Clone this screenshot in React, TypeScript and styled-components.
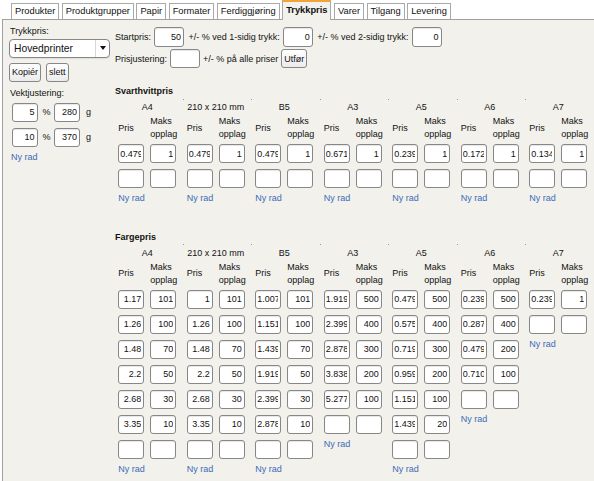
import React from "react";
import styled, { createGlobalStyle } from "styled-components";

const GlobalStyle = createGlobalStyle`
  html, body {
    margin: 0;
    padding: 0;
    background: #fff;
  }
  body {
    font-family: "Liberation Sans", Arial, sans-serif;
    font-size: 9px;
    color: #111;
  }
`;

const Page = styled.div`
  width: 594px;
  height: 481px;
  overflow: hidden;
  display: flex;
  flex-direction: column;
`;

const TabBar = styled.div`
  display: flex;
  align-items: flex-end;
  height: 19px;
  padding-left: 11px;
  gap: 2.5px;
  position: relative;
  z-index: 1;
`;

const Tab = styled.div<{ $active?: boolean }>`
  box-sizing: border-box;
  height: ${(p) => (p.$active ? 20 : 16)}px;
  margin-bottom: ${(p) => (p.$active ? -1 : 0)}px;
  padding: 0 3px;
  border: 1px solid #a9a9a9;
  border-bottom: none;
  border-top: ${(p) => (p.$active ? "2px solid #f2a33a" : "1px solid #a9a9a9")};
  background: ${(p) => (p.$active ? "#f2f1ec" : "#fff")};
  font-size: 9.3px;
  font-weight: ${(p) => (p.$active ? "bold" : "normal")};
  line-height: ${(p) => (p.$active ? 17 : 15)}px;
  white-space: nowrap;
`;

const Panel = styled.div`
  flex: 1;
  display: flex;
  margin-left: 2px;
  padding: 5px 0 0 6px;
  background: #f2f1ec;
  border-top: 1px solid #a0a0a0;
  border-left: 1px solid #a0a0a0;
`;

const LeftCol = styled.div`
  width: 106px;
  flex-shrink: 0;
  display: flex;
  flex-direction: column;
`;

const Label = styled.div<{ $top?: number }>`
  line-height: 11px;
  margin-top: ${(p) => p.$top ?? 0}px;
  padding-left: 1px;
`;

const SelectBox = styled.div`
  box-sizing: border-box;
  width: 101px;
  height: 19px;
  margin-top: 2px;
  display: flex;
  align-items: center;
  border: 1px solid #878787;
  border-radius: 4px;
  background: #fff;
  box-shadow: 0 1px 1px rgba(0, 0, 0, 0.08);
`;

const SelectText = styled.span`
  flex: 1;
  padding-left: 4px;
  font-size: 10.3px;
`;

const SelectArrow = styled.span`
  width: 13px;
  height: 100%;
  display: flex;
  align-items: center;
  justify-content: center;
  border-left: 1px solid #d6d6d6;

  &::after {
    content: "";
    border-left: 3.5px solid transparent;
    border-right: 3.5px solid transparent;
    border-top: 4px solid #111;
  }
`;

const ButtonRow = styled.div`
  display: flex;
  gap: 5px;
  margin-top: 5px;
`;

const Button = styled.button`
  box-sizing: border-box;
  height: 19px;
  margin: 0;
  padding: 0 2px;
  border: 1px solid #878787;
  border-radius: 3px;
  background: linear-gradient(#ffffff, #ebebeb);
  font-family: "Liberation Sans", Arial, sans-serif;
  font-size: 9px;
  color: #111;
`;

const WeightRow = styled.div<{ $top: number }>`
  display: flex;
  align-items: center;
  margin-top: ${(p) => p.$top}px;
  padding-left: 2.5px;
`;

const Unit = styled.span<{ $l: number; $r?: number }>`
  margin-left: ${(p) => p.$l}px;
  margin-right: ${(p) => p.$r ?? 0}px;
`;

const Field = styled.input<{ $w?: number; $h?: number }>`
  box-sizing: border-box;
  width: ${(p) => p.$w ?? 26}px;
  height: ${(p) => p.$h ?? 19}px;
  margin: 0;
  padding: 0 2px 0 1px;
  border: 1px solid #878787;
  border-radius: 3px;
  background: #fff;
  box-shadow: inset 0 1px 1px rgba(0, 0, 0, 0.1);
  font-family: "Liberation Sans", Arial, sans-serif;
  font-size: 9px;
  color: #111;
  text-align: right;
  outline: none;
`;

const Link = styled.div<{ $top: number; $indent?: number }>`
  margin-top: ${(p) => p.$top}px;
  padding-left: ${(p) => p.$indent ?? 0}px;
  line-height: 11px;
  color: #3b6cb8;
  cursor: pointer;
`;

const Main = styled.div`
  flex: 1;
  display: flex;
  flex-direction: column;
`;

const ControlRow = styled.div<{ $top: number }>`
  display: flex;
  align-items: center;
  gap: 3px;
  margin-top: ${(p) => p.$top}px;
  white-space: nowrap;
`;

const After = styled.span`
  margin-left: 1.5px;
`;

const SectionTitle = styled.div<{ $top: number }>`
  margin-top: ${(p) => p.$top}px;
  line-height: 11px;
  font-weight: bold;
`;

const FormatRow = styled.div`
  display: flex;
  align-items: flex-start;
  gap: 10.5px;
  padding-left: 3.3px;
  margin-top: 5px;
`;

const Group = styled.div`
  position: relative;
  width: 58px;
  flex-shrink: 0;
  display: flex;
  flex-direction: column;

  &:not(:first-child)::before {
    content: "";
    position: absolute;
    top: -3.5px;
    left: -4px;
    width: 1px;
    height: 1px;
    background: #9a9a9a;
  }
`;

const GroupName = styled.div`
  height: 11px;
  line-height: 11px;
  text-align: center;
  white-space: nowrap;
`;

const Grid = styled.div<{ $top: number }>`
  display: grid;
  grid-template-columns: 26px 26px;
  column-gap: 6px;
  row-gap: 6px;
  align-items: center;
  margin-top: ${(p) => p.$top}px;
`;

const ColHead = styled.div`
  line-height: 13px;
`;

type Row = [string, string];
type Format = { name: string; rows: Row[] };

const blank: Row = ["", ""];

const mono: Format[] = [
  { name: "A4", rows: [["0.479", "1"], blank] },
  { name: "210 x 210 mm", rows: [["0.479", "1"], blank] },
  { name: "B5", rows: [["0.479", "1"], blank] },
  { name: "A3", rows: [["0.671", "1"], blank] },
  { name: "A5", rows: [["0.239", "1"], blank] },
  { name: "A6", rows: [["0.172", "1"], blank] },
  { name: "A7", rows: [["0.134", "1"], blank] },
];

const color: Format[] = [
  {
    name: "A4",
    rows: [["1.17", "101"], ["1.26", "100"], ["1.48", "70"], ["2.2", "50"], ["2.68", "30"], ["3.35", "10"], blank],
  },
  {
    name: "210 x 210 mm",
    rows: [["1", "101"], ["1.26", "100"], ["1.48", "70"], ["2.2", "50"], ["2.68", "30"], ["3.35", "10"], blank],
  },
  {
    name: "B5",
    rows: [["1.007", "101"], ["1.151", "100"], ["1.439", "70"], ["1.919", "50"], ["2.399", "30"], ["2.878", "10"], blank],
  },
  {
    name: "A3",
    rows: [["1.919", "500"], ["2.399", "400"], ["2.878", "300"], ["3.838", "200"], ["5.277", "100"], blank],
  },
  {
    name: "A5",
    rows: [["0.479", "500"], ["0.575", "400"], ["0.719", "300"], ["0.959", "200"], ["1.151", "100"], ["1.439", "20"], blank],
  },
  {
    name: "A6",
    rows: [["0.239", "500"], ["0.287", "400"], ["0.479", "200"], ["0.710", "100"], blank],
  },
  { name: "A7", rows: [["0.239", "1"], blank] },
];

const tabs = [
  "Produkter",
  "Produktgrupper",
  "Papir",
  "Formater",
  "Ferdiggjøring",
  "Trykkpris",
  "Varer",
  "Tilgang",
  "Levering",
];

const PriceSection = ({ title, formats, top }: { title: string; formats: Format[]; top: number }) => (
  <>
    <SectionTitle $top={top}>{title}</SectionTitle>
    <FormatRow>
      {formats.map((f) => (
        <Group key={f.name}>
          <GroupName>{f.name}</GroupName>
          <Grid $top={2}>
            <ColHead>Pris</ColHead>
            <ColHead>
              Maks
              <br />
              opplag
            </ColHead>
          </Grid>
          <Grid $top={3}>
            {f.rows.map((r, i) => (
              <React.Fragment key={i}>
                <Field readOnly defaultValue={r[0]} />
                <Field readOnly defaultValue={r[1]} />
              </React.Fragment>
            ))}
          </Grid>
          <Link $top={5}>Ny rad</Link>
        </Group>
      ))}
    </FormatRow>
  </>
);

const App = () => {
  return (
    <Page>
      <GlobalStyle />
      <TabBar>
        {tabs.map((t) => (
          <Tab key={t} $active={t === "Trykkpris"}>
            {t}
          </Tab>
        ))}
      </TabBar>
      <Panel>
        <LeftCol>
          <Label $top={0.5}>Trykkpris:</Label>
          <SelectBox>
            <SelectText>Hovedprinter</SelectText>
            <SelectArrow />
          </SelectBox>
          <ButtonRow>
            <Button>Kopiér</Button>
            <Button>slett</Button>
          </ButtonRow>
          <Label $top={6}>Vektjustering:</Label>
          <WeightRow $top={4}>
            <Field readOnly defaultValue="5" />
            <Unit $l={5} $r={3.5}>%</Unit>
            <Field readOnly defaultValue="280" />
            <Unit $l={6}>g</Unit>
          </WeightRow>
          <WeightRow $top={6}>
            <Field readOnly defaultValue="10" />
            <Unit $l={5} $r={3.5}>%</Unit>
            <Field readOnly defaultValue="370" />
            <Unit $l={6}>g</Unit>
          </WeightRow>
          <Link $top={5} $indent={2}>
            Ny rad
          </Link>
        </LeftCol>
        <Main>
          <ControlRow $top={1.7}>
            <span>Startpris:</span>
            <Field readOnly defaultValue="50" $w={30} $h={20} />
            <After>+/- % ved 1-sidig trykk:</After>
            <Field readOnly defaultValue="0" $w={30} $h={20} />
            <After>+/- % ved 2-sidig trykk:</After>
            <Field readOnly defaultValue="0" $w={30} $h={20} />
          </ControlRow>
          <ControlRow $top={2.6}>
            <span>Prisjustering:</span>
            <Field readOnly defaultValue="" $w={30} />
            <span>+/- % på alle priser</span>
            <Button>Utfør</Button>
          </ControlRow>
          <PriceSection title="Svarthvittpris" formats={mono} top={18.2} />
          <PriceSection title="Fargepris" formats={color} top={27.5} />
        </Main>
      </Panel>
    </Page>
  );
};

export default App;
